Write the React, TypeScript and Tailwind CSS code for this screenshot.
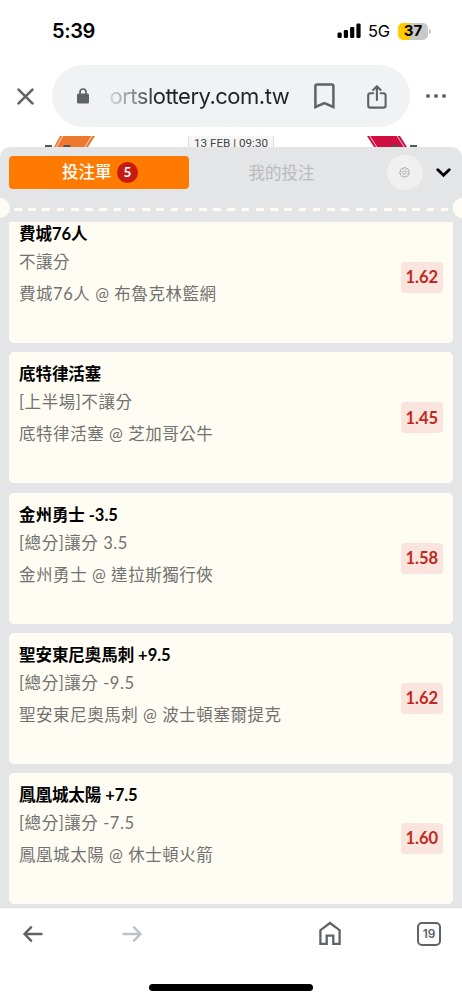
import { useState } from 'react';

interface Bet {
  id: number;
  pick: string;
  market: string;
  match: string;
  odds: string;
}

const BETS: Bet[] = [
  { id: 1, pick: '費城76人', market: '不讓分', match: '費城76人 @ 布魯克林籃網', odds: '1.62' },
  { id: 2, pick: '底特律活塞', market: '[上半場]不讓分', match: '底特律活塞 @ 芝加哥公牛', odds: '1.45' },
  { id: 3, pick: '金州勇士 -3.5', market: '[總分]讓分 3.5', match: '金州勇士 @ 達拉斯獨行俠', odds: '1.58' },
  { id: 4, pick: '聖安東尼奧馬刺 +9.5', market: '[總分]讓分 -9.5', match: '聖安東尼奧馬刺 @ 波士頓塞爾提克', odds: '1.62' },
  { id: 5, pick: '鳳凰城太陽 +7.5', market: '[總分]讓分 -7.5', match: '鳳凰城太陽 @ 休士頓火箭', odds: '1.60' },
];

function StatusBar() {
  return (
    <div className="flex h-[65px] shrink-0 items-start justify-between pt-[19px] pr-[31px] pl-[52px] font-['Inter',sans-serif] text-black">
      <span className="text-[20px] leading-6 font-semibold tracking-[-0.4px]">5:39</span>
      <div className="flex h-6 items-center">
        <svg width="24" height="16" viewBox="0 0 24 16" className="mr-[7px]">
          <rect x="0.5" y="9.5" width="4.2" height="5.5" rx="1.2" />
          <rect x="6.8" y="7" width="4.2" height="8" rx="1.2" />
          <rect x="13.1" y="4" width="4.2" height="11" rx="1.2" />
          <rect x="19.4" y="0.5" width="4.2" height="14.5" rx="1.2" />
        </svg>
        <span className="mr-[8px] w-[22px] text-[16.5px] leading-6 tracking-[-0.4px]">5G</span>
        <div className="flex h-[17px] w-[30px] items-center justify-center rounded-[5px] bg-[linear-gradient(to_right,#fdcb00_39%,#c9c9c9_39%)] text-[15px] font-bold">
          37
        </div>
        <div className="ml-px h-[5px] w-[2px] rounded-r-full bg-[#c9c9c9]" />
      </div>
    </div>
  );
}

function AddressBar() {
  return (
    <div className="flex h-[62px] shrink-0 items-center pl-[17px] text-[#5f6368]">
      <button type="button" aria-label="Close" className="w-[35px]">
        <svg width="17" height="17" viewBox="0 0 17 17" fill="none" stroke="currentColor" strokeWidth="2.6" strokeLinecap="round">
          <path d="M1.6 1.6 15.4 15.4M15.4 1.6 1.6 15.4" />
        </svg>
      </button>
      <div className="flex h-[62px] w-[358px] items-center rounded-full bg-[#f1f2f4] pl-[25px]">
        <svg width="12" height="16" viewBox="0 0 12 16" fill="none" className="mr-[20.5px]">
          <rect x="0" y="5.5" width="12" height="10" rx="1.5" fill="currentColor" />
          <path d="M3 6.5V4a3 3 0 0 1 6 0v2.5" stroke="currentColor" strokeWidth="1.7" />
        </svg>
        <span className="w-[204.5px] bg-[linear-gradient(to_right,#d4d5d7_0px,#8d8f92_22px,#202124_48px)] bg-clip-text font-['Inter',sans-serif] text-[22px] leading-[30px] tracking-[-0.5px] whitespace-nowrap text-transparent">
          ortslottery.com.tw
        </span>
        <svg width="21" height="26" viewBox="0 0 21 26" fill="none" stroke="currentColor" strokeWidth="2.5">
          <path d="M1.4 24V3Q1.4 1.4 3 1.4H17.8Q19.4 1.4 19.4 3V24L10.4 20.2Z" />
        </svg>
        <svg width="20" height="24" viewBox="0 0 20 24" fill="none" stroke="currentColor" strokeWidth="2.1" strokeLinecap="round" strokeLinejoin="round" className="mt-[2px] ml-[31.5px]">
          <path d="M6.2 8.2H3.4Q1.2 8.2 1.2 10.4V20.4Q1.2 22.6 3.4 22.6H16.4Q18.6 22.6 18.6 20.4V10.4Q18.6 8.2 16.4 8.2H13.6M9.9 15V1.5M6.2 4.9 9.9 1.2 13.6 4.9" />
        </svg>
      </div>
      <button type="button" aria-label="More" className="ml-[16px] flex gap-[3.4px]">
        <span className="size-[4.4px] rounded-full bg-current" />
        <span className="size-[4.4px] rounded-full bg-current" />
        <span className="size-[4.4px] rounded-full bg-current" />
      </button>
    </div>
  );
}

// Strip of the page that stays visible above the bet slip
function PageStrip() {
  return (
    <div className="mt-[9px] flex h-[11px] shrink-0 items-start overflow-hidden">
      <svg width="55" height="11" viewBox="0 0 55 11" className="ml-[43px]">
        <path d="M17 0H52L45 11H11Z" fill="#ee792e" />
        <path d="M19.7 0 13.5 11M48.8 0 42 11" stroke="#fff" strokeWidth="0.8" />
        <path d="M2 10H9M20.5 10H27.5" stroke="#555" strokeWidth="1.8" />
      </svg>
      <div className="ml-[90px] h-[11px] w-[86px] border-x border-[#dcdcdc] bg-[#f5f5f5] text-center font-['Roboto',sans-serif] text-[11.7px] leading-[14px] whitespace-nowrap text-[#444]">
        13 FEB | 09:30
      </div>
      <svg width="55" height="11" viewBox="0 0 55 11" className="ml-[92px]">
        <path d="M1 0H34L41 11H8Z" fill="#d10e42" />
        <path d="M3.8 0 10.7 11M31.2 0 38.2 11" stroke="#fff" strokeWidth="0.8" />
        <path d="M25.5 10H32.5M44 10H51" stroke="#555" strokeWidth="1.8" />
      </svg>
    </div>
  );
}

function SlipHeader() {
  const [tab, setTab] = useState<'slip' | 'mine'>('slip');

  return (
    <div className="flex h-[51px] items-center pl-[9px] text-[16.5px]">
      <button
        type="button"
        onClick={() => setTab('slip')}
        aria-pressed={tab === 'slip'}
        className="flex h-[33px] w-[180px] items-center justify-center gap-[5.5px] rounded-[4px] bg-[#ff7a00] pl-[2px] font-medium text-white"
      >
        <span className="leading-none">投注單</span>
        <span className="flex size-[21px] items-center justify-center rounded-full bg-[#c51b12] text-[13.5px] leading-none font-bold">5</span>
      </button>
      <button type="button" onClick={() => setTab('mine')} aria-pressed={tab === 'mine'} className="w-[185px] pt-px text-[#b9babc]">
        我的投注
      </button>
      <button type="button" aria-label="Settings" className="ml-[13px] flex size-[35.5px] items-center justify-center rounded-full bg-[#f0f0f1] text-[#a5a5a5]">
        <svg width="11" height="11" viewBox="0 0 22 22" fill="none" stroke="currentColor" strokeWidth="1.8" strokeLinejoin="round">
          <path d="M8.7 1.5H13.3L14.3 4.2 17.1 3.3 19.3 6.2 17.7 8.7 20.8 10.2V12.4L17.9 13.6 18.8 16.6 16.2 19 13.8 17.8 12.2 20.7H9.6L8.2 17.8 5.5 18.8 3 16.4 4.2 13.6 1.3 12.4V10L4.2 8.5 3.2 5.8 5.5 3.3 8 4.2Z" />
          <circle cx="11" cy="11" r="3.4" />
        </svg>
      </button>
      <button type="button" aria-label="Collapse" className="ml-[13.5px] pt-px text-black">
        <svg width="15" height="10" viewBox="0 0 15 10" fill="none" stroke="currentColor" strokeWidth="2.9" strokeLinecap="round">
          <path d="M1.8 1.8 7.5 7.2 13.2 1.8" />
        </svg>
      </button>
    </div>
  );
}

function Perforation() {
  return (
    <div className="flex h-[24px] items-start justify-between overflow-hidden">
      <div className="h-[19.5px] w-[9.5px] rounded-r-full bg-[#fffdf3]" />
      <div className="mt-[10px] h-[3px] w-[434.5px] bg-[repeating-linear-gradient(to_right,#fffdf3_0px,#fffdf3_7.6px,transparent_7.6px,transparent_14.23px)]" />
      <div className="h-[19.5px] w-[9.5px] rounded-l-full bg-[#fffdf3]" />
    </div>
  );
}

function BetCard({ bet }: { bet: Bet }) {
  return (
    <div className="flex h-[131px] shrink-0 items-center justify-between rounded-[5px] bg-[#fffdf3] pr-[9.5px] pl-[10px]">
      <div className="h-full pt-[8px] text-[16.5px] whitespace-nowrap text-[#727270]">
        <div className="leading-[28px] font-bold tracking-[-0.05px] text-black">{bet.pick}</div>
        <div className="leading-[28px] tracking-[0.55px]">{bet.market}</div>
        <div className="mt-[4px] leading-[28px] tracking-[0.55px]">{bet.match}</div>
      </div>
      <div className="flex h-[31px] w-[42.5px] items-center justify-center rounded-[4px] bg-[#f9e5de] text-[16.5px] font-bold text-[#c0291f]">
        {bet.odds}
      </div>
    </div>
  );
}

function BottomBar() {
  return (
    <nav className="h-[93px] shrink-0 border-t border-[#dcdde0] bg-white text-[#5f6368]">
      <div className="flex h-[51px] items-center pl-[23px]">
        <svg width="20" height="16" viewBox="0 0 20 16" fill="none" stroke="currentColor" strokeWidth="2.5" strokeLinecap="round" strokeLinejoin="round">
          <path d="M18.5 8H1.5M8 1.3 1.5 8 8 14.7" />
        </svg>
        <svg width="20" height="16" viewBox="0 0 20 16" fill="none" stroke="currentColor" strokeWidth="2.5" strokeLinecap="round" strokeLinejoin="round" className="ml-[79px] text-[#bdc1c6]">
          <path d="M1.5 8H18.5M12 1.3 18.5 8 12 14.7" />
        </svg>
        <svg width="22" height="25" viewBox="0 0 22 25" fill="none" stroke="currentColor" strokeWidth="2.3" className="ml-[177px]">
          <path d="M1.4 22.8V9.2L11 2 20.6 9.2V22.8H14.3V14.6H7.7V22.8Z" />
        </svg>
        <div className="ml-[76px] flex size-[24px] items-center justify-center rounded-[5px] border-2 border-current font-['Inter',sans-serif] text-[12px] leading-none font-semibold">
          19
        </div>
      </div>
      <div className="mx-auto mt-[25px] h-[6.5px] w-[164.5px] rounded-full bg-black" />
    </nav>
  );
}

export default function App() {
  return (
    <div className="flex h-screen w-[462px] flex-col overflow-hidden bg-white">
      <StatusBar />
      <AddressBar />
      <PageStrip />
      <section className="flex h-[760px] shrink-0 flex-col rounded-t-[10px] bg-[#e4e5e7] font-['Lato','Noto_Sans_CJK_TC',sans-serif]">
        <SlipHeader />
        <Perforation />
        {/* The list is scrolled to the end, so the first card is cut off at the top */}
        <div className="mr-[9.5px] ml-[9px] flex h-[682.2px] flex-col justify-end gap-[9.25px] overflow-hidden">
          {BETS.map((bet) => (
            <BetCard key={bet.id} bet={bet} />
          ))}
        </div>
      </section>
      <BottomBar />
    </div>
  );
}
